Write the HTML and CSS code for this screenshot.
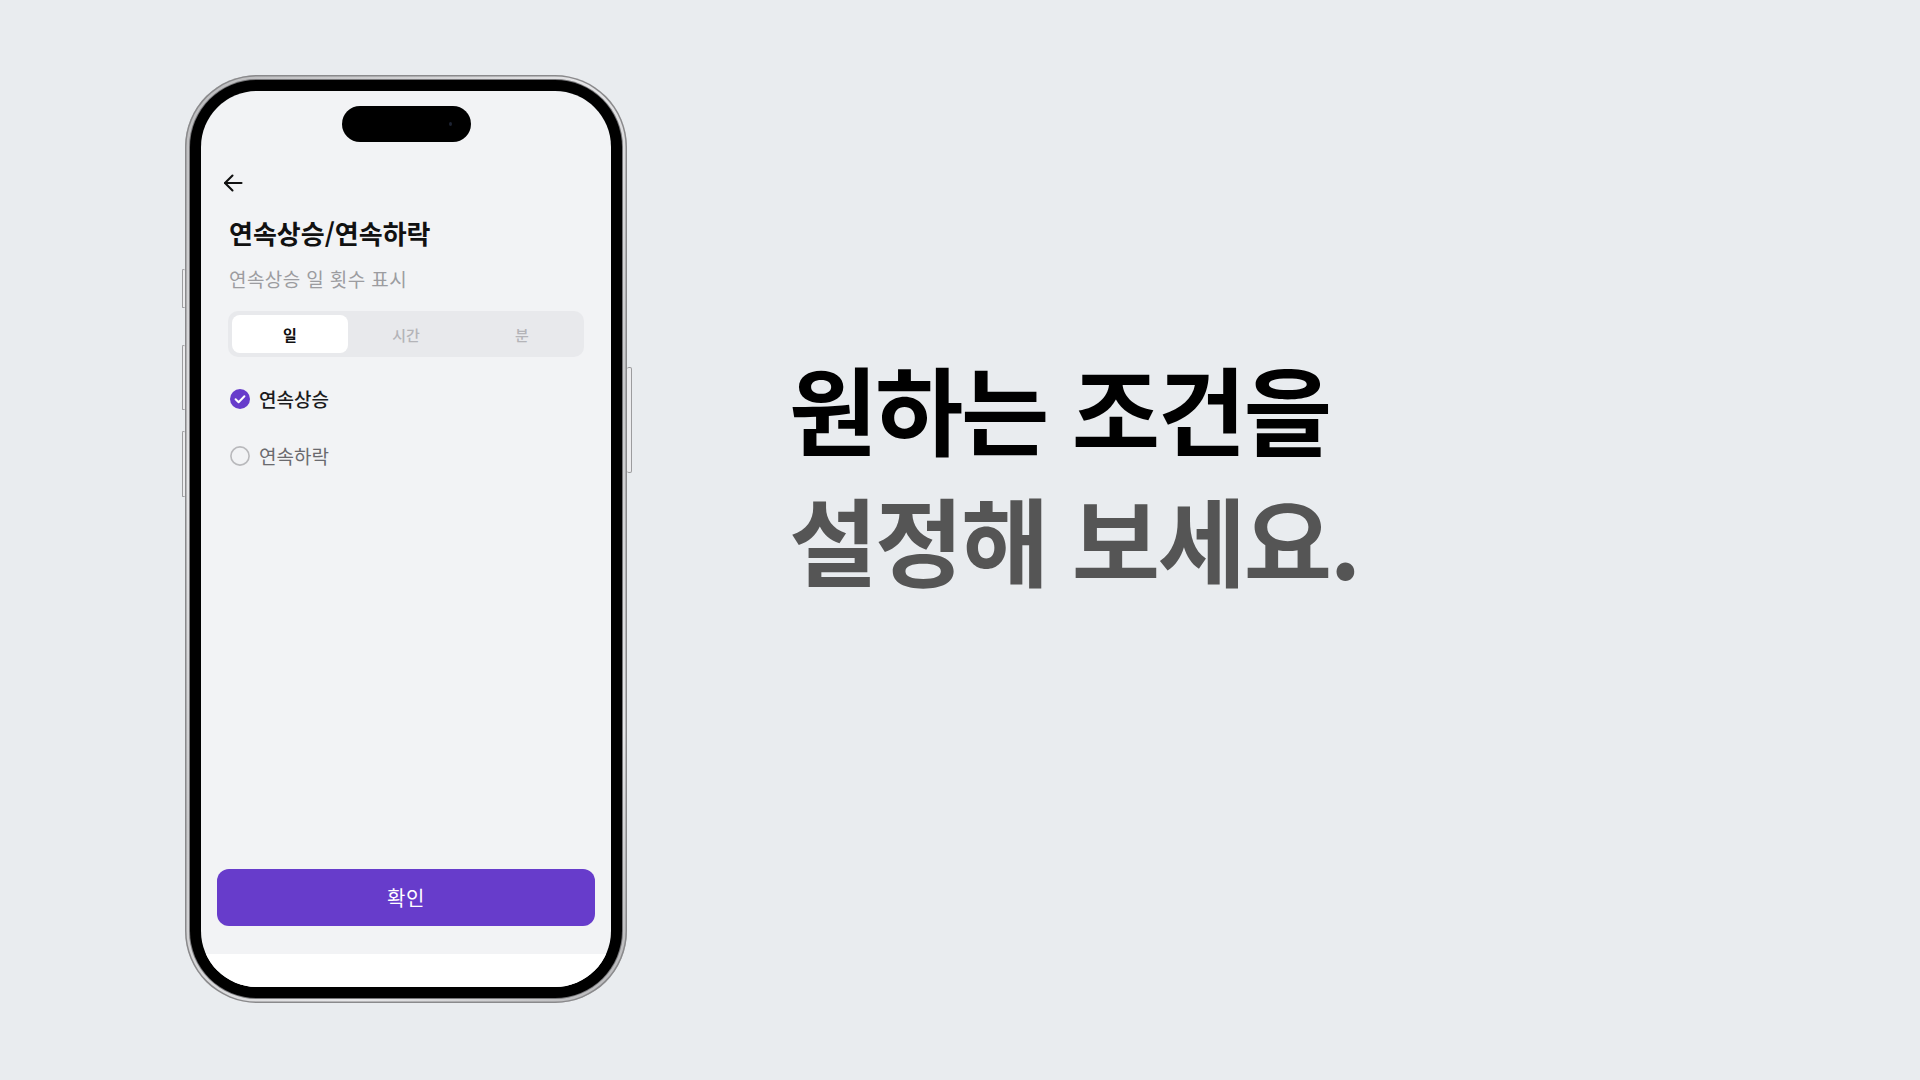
FILE: index.html
```html
<!DOCTYPE html>
<html lang="ko">
<head>
<meta charset="utf-8">
<title>연속상승/연속하락</title>
<link rel="stylesheet" href="styles.css">
</head>
<body>
<div class="stage">
  <div class="phone">
    <span class="side-btn side-l1"></span>
    <span class="side-btn side-l2"></span>
    <span class="side-btn side-l3"></span>
    <span class="side-btn side-r1"></span>
    <div class="bezel">
      <div class="screen">
        <div class="island"><span class="cam"></span></div>
        <div class="appbar">
          <svg class="back" width="20" height="18" viewBox="0 0 20 18" fill="none" stroke="#111" stroke-width="2.1" stroke-linecap="round" stroke-linejoin="round"><path d="M18.5 9H2"/><path d="M9.5 1.5L2 9l7.5 7.5"/></svg>
        </div>
        <div class="content">
          <h1 class="title">연속상승/연속하락</h1>
          <p class="subtitle">연속상승 일 횟수 표시</p>
          <div class="segmented">
            <div class="seg seg-active">일</div>
            <div class="seg">시간</div>
            <div class="seg">분</div>
          </div>
          <div class="options">
            <div class="option">
              <svg class="radio" width="20" height="20" viewBox="0 0 20 20"><circle cx="10" cy="10" r="10" fill="#673ccb"/><path d="M5.6 10.3l3 2.9 5.8-6" fill="none" stroke="#fff" stroke-width="2" stroke-linecap="round" stroke-linejoin="round"/></svg>
              <span class="opt-label opt-on">연속상승</span>
            </div>
            <div class="option">
              <svg class="radio" width="20" height="20" viewBox="0 0 20 20"><circle cx="10" cy="10" r="9.1" fill="none" stroke="#b9b9bc" stroke-width="1.6"/></svg>
              <span class="opt-label opt-off">연속하락</span>
            </div>
          </div>
        </div>
        <div class="footer">
          <button class="confirm">확인</button>
        </div>
        <div class="home-area"></div>
      </div>
    </div>
  </div>
  <div class="headline">
    <div class="line line-1">원하는 조건을</div>
    <div class="line line-2">설정해 보세요.</div>
  </div>
</div>
</body>
</html>
```
FILE: styles.css
```css
html, body {
  margin: 0;
  padding: 0;
}
body {
  width: 1920px;
  height: 1080px;
  overflow: hidden;
  background: #e9ecef;
  font-family: "Noto Sans CJK KR", "Noto Sans", sans-serif;
}
.stage {
  display: flex;
  align-items: flex-start;
  gap: 162px;
  padding: 75px 0 0 185px;
  box-sizing: border-box;
  height: 1080px;
}

/* phone frame */
.phone {
  position: relative;
  width: 442px;
  height: 928px;
  box-sizing: border-box;
  border-radius: 72px;
  padding: 5px;
  background: linear-gradient(135deg, #b9b9bb 0%, #e4e4e6 30%, #c8c8ca 55%, #e6e6e8 80%, #b4b4b6 100%);
  box-shadow: inset 0 0 0 1.5px #8a8a8c;
  flex: none;
}
.side-btn {
  position: absolute;
  width: 3px;
  box-sizing: border-box;
  background: #ececee;
  border: 1px solid #9c9c9e;
  border-radius: 2px;
}
.side-l1 { left: -3px; top: 194px; height: 39px; border-right: 0; }
.side-l2 { left: -3px; top: 270px; height: 65px; border-right: 0; }
.side-l3 { left: -3px; top: 356px; height: 66px; border-right: 0; }
.side-r1 { right: -5px; top: 292px; height: 106px; width: 5px; border-left: 0; }

.bezel {
  height: 100%;
  box-sizing: border-box;
  background: #000;
  border-radius: 67px;
  padding: 11px;
  box-shadow: 0 0 0 1px #77777a;
}
.screen {
  height: 100%;
  background: #f2f3f5;
  border-radius: 56px;
  overflow: hidden;
  display: flex;
  flex-direction: column;
}
.island {
  width: 129px;
  height: 36px;
  margin: 15px auto 0;
  background: #000;
  border-radius: 18px;
  display: flex;
  align-items: center;
  justify-content: flex-end;
  padding-right: 19px;
  box-sizing: border-box;
  flex: none;
}
.cam {
  width: 3px;
  height: 4px;
  border-radius: 50%;
  background: #1d2333;
}
.appbar {
  margin-top: 31px;
  padding-left: 22px;
  height: 20px;
  display: flex;
  align-items: center;
  flex: none;
}
.back { display: block; }

.content {
  padding: 0 27px;
  flex: none;
}
.title {
  margin: 23px 0 0 1px;
  font-size: 26px;
  line-height: 33px;
  font-weight: 700;
  letter-spacing: 0;
  color: #111;
}
.subtitle {
  margin: 17px 0 0 1px;
  font-size: 19px;
  line-height: 25px;
  font-weight: 400;
  color: #9c9ca0;
  letter-spacing: 0.4px;
}
.segmented {
  margin-top: 20px;
  height: 46px;
  box-sizing: border-box;
  padding: 4px;
  background: #e8e9ec;
  border-radius: 10px;
  display: grid;
  grid-template-columns: 1fr 1fr 1fr;
}
.seg {
  display: flex;
  align-items: center;
  justify-content: center;
  font-size: 15px;
  font-weight: 500;
  color: #b4b4b8;
  border-radius: 8px;
}
.seg-active {
  background: #fff;
  color: #111;
  font-weight: 700;
}
.options {
  margin-top: 30px;
  display: flex;
  flex-direction: column;
  gap: 33px;
}
.option {
  height: 24px;
  display: flex;
  align-items: center;
  gap: 9px;
  padding-left: 2px;
}
.radio { display: block; flex: none; }
.opt-label {
  font-size: 19px;
  letter-spacing: 0;
  line-height: 24px;
}
.opt-on { color: #1b1b1d; font-weight: 500; }
.opt-off { color: #6a6a6e; font-weight: 400; }

.footer {
  margin-top: auto;
  padding: 0 16px 28px;
  flex: none;
}
.confirm {
  display: block;
  width: 100%;
  height: 57px;
  border: 0;
  border-radius: 12px;
  background: #673ccb;
  color: #fff;
  font-family: "Noto Sans CJK KR", "Noto Sans", sans-serif;
  font-size: 20px;
  font-weight: 400;
  letter-spacing: 0.5px;
}
.home-area {
  height: 33px;
  background: #fff;
  flex: none;
}

/* headline */
.headline {
  margin-top: 266px;
  white-space: nowrap;
}
.line {
  font-size: 96px;
  line-height: 131px;
  font-weight: 700;
  letter-spacing: -2.3px;
}
.line-1 { color: #000; }
.line-2 { color: #555; }
```
